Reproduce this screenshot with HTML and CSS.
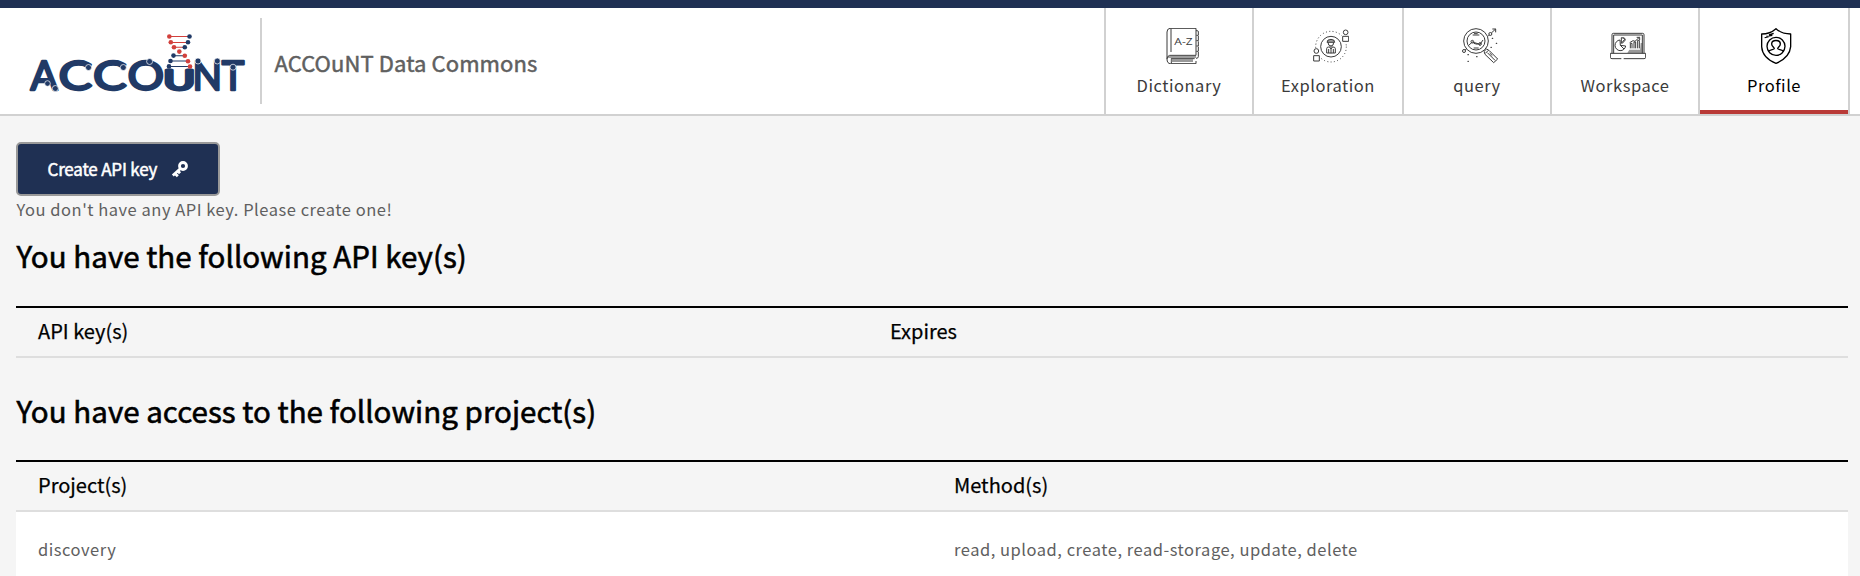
FILE: index.html
```
<!DOCTYPE html>
<html lang="en">
<head>
<meta charset="utf-8">
<title>ACCOuNT Data Commons</title>
<link rel="stylesheet" href="styles.css">
</head>
<body>
<div class="top-bar"></div>
<header class="header">
  <svg class="logo" viewBox="0 0 224 72" role="img" aria-label="ACCOuNT">
    <g class="logo-letters">
      <text x="1.500" y="61" textLength="27" lengthAdjust="spacingAndGlyphs">A</text>
      <text x="29.500" y="61" textLength="33.500" lengthAdjust="spacingAndGlyphs">C</text>
      <text x="64" y="61" textLength="33.500" lengthAdjust="spacingAndGlyphs">C</text>
      <text x="98.500" y="61" textLength="36.500" lengthAdjust="spacingAndGlyphs">O</text>
      <text class="logo-u" x="134.500" y="60.500" textLength="31.500" lengthAdjust="spacingAndGlyphs">U</text>
      <text x="163.500" y="61" textLength="29.500" lengthAdjust="spacingAndGlyphs">N</text>
      <text x="192.800" y="61" textLength="22.500" lengthAdjust="spacingAndGlyphs">T</text>
    </g>
    <g class="logo-dot">
      <circle cx="18.500" cy="54.500" r="2.800"/><circle cx="26.300" cy="59.500" r="3"/>
      <circle cx="59.500" cy="38.500" r="3"/><circle cx="94.300" cy="38.500" r="3"/>
      <circle cx="120.600" cy="32.500" r="3"/>
      <circle cx="169" cy="32" r="3"/><circle cx="188.300" cy="32" r="3"/><circle cx="204" cy="38.200" r="3"/>
    </g>
    <path class="helix-rung red" d="M140.500 7.500H160M142 13.500H158M145 18.300H155"/>
    <path class="helix-rung" d="M144.500 26.700H155M142 32H158M140.500 37.500H160"/>
    <g class="helix-red"><circle cx="140.300" cy="7.500" r="2.300"/><circle cx="141.800" cy="13.300" r="2.300"/><circle cx="145" cy="18.200" r="2.300"/><circle cx="150.300" cy="22.600" r="2.300"/><circle cx="155.800" cy="26.700" r="2.300"/><circle cx="159" cy="32.200" r="2.300"/><circle cx="161" cy="37.500" r="2.300"/></g>
    <g class="helix-blue"><circle cx="160.500" cy="7.500" r="2.300"/><circle cx="159" cy="13.300" r="2.300"/><circle cx="155.800" cy="18.200" r="2.300"/><circle cx="144.500" cy="26.600" r="2.300"/><circle cx="141.500" cy="32" r="2.300"/><circle cx="140" cy="37.400" r="2.300"/></g>
  </svg>
  <div class="divider"></div>
  <div class="site-title">ACCOuNT Data Commons</div>
  <nav class="nav">
    <a class="nav-item">
      <svg class="nav-icon" viewBox="0 0 108 108">
        <path d="M18 1H96V82H17Q9 84 9 93Q9 107 20 107H96V99M18 1Q9 2 9 12V93M21 2V72M12 87H96M22 92H92M22 106V91"/>
        <path class="shade" d="M23 93H87V102H23Z"/>
        <path d="M96 8H100Q103 8 103 12V22H97M103 24V38H97M103 40V54H97M103 56V70H97M103 72V86Q103 91 96 91"/>
        <text class="az" x="31" y="50" textLength="55" lengthAdjust="spacingAndGlyphs">A-Z</text>
      </svg>
      <span>Dictionary</span>
    </a>
    <a class="nav-item">
      <svg class="nav-icon" viewBox="0 0 108 108">
        <circle class="dots" cx="54" cy="56" r="46"/>
        <path class="gap" d="M0 60H22V102H0ZM86 4H108V42H86Z"/>
        <circle cx="54" cy="56" r="31"/>
        <circle cx="10" cy="69" r="7"/><path d="M2 83H19V99H2Z"/>
        <circle cx="98" cy="13" r="7"/><path d="M89 25H107V40H89Z"/>
        <path d="M42 43Q42 34 54 34Q65 34 65 43ZM43 39H64M45 43Q45 54 54 54Q62 54 62 43M41 75V62Q41 57 47 57H60Q67 57 67 62V75M50 58L54 63L58 58M54 63V76M47 63V75M61 63V75M41 75H67"/>
      </svg>
      <span>Exploration</span>
    </a>
    <a class="nav-item">
      <svg class="nav-icon" viewBox="0 0 108 108">
        <circle cx="42" cy="39" r="37"/><circle cx="42" cy="39" r="27"/>
        <path d="M20 52L31 42L54 49L63 36M35 46L47 49M32 21H52M36 17H47M35 60H50"/><circle cx="31" cy="41" r="4"/><circle cx="54" cy="48" r="4"/>
        <path d="M78 25L83 20M88 15L101 3M91 3H101V13"/><circle cx="85" cy="18" r="4.500"/><circle cx="6" cy="69" r="4.500"/><path d="M10 66L14 61"/>
        <path d="M66 70L74 63L82 68L107 93L95 104L69 79ZM70 76L79 67M76 74L99 97M83 75L91 83"/>
        <path class="specks" d="M91 31h1M103 46h1M87 58h1M44 86h1M18 80h1M18 100h1"/>
      </svg>
      <span>query</span>
    </a>
    <a class="nav-item">
      <svg class="nav-icon" viewBox="0 0 108 108">
        <path class="shade" d="M58 65H97V75H52ZM92 45H97V70H90Z"/>
        <path d="M6 76V20Q6 16 10 16H98Q102 16 102 20V76M11 76V21H97V76M1 76H107V88Q107 92 102 92H41M34 92H6Q1 92 1 88V76"/>
        <path d="M30 36A16 16 0 1 0 47 54L31 52ZM31 52L42 63M34 29V46L44 34Q41 29 34 29M38 29Q46 29 46 36L36 47M61 61V46H66V61M72 61V42H77V61M83 61V37H88V61M59 44L69 38L75 40L88 28M80 28H89V36"/>
      </svg>
      <span>Workspace</span>
    </a>
    <a class="nav-item active">
      <svg class="nav-icon" viewBox="0 0 108 108">
        <path d="M54 2Q36 18 11 18V56Q13 89 54 106Q95 89 98 56V18Q71 18 54 2Z"/>
        <circle cx="54" cy="55" r="27"/>
        <path d="M49 62C49 58 41 55 41 48C41 34 67 34 67 48C67 55 59 58 59 62C60 66 74 64 77 71M49 62C48 66 35 64 31 71M20 29L32 26M33 21L47 16M25 25L43 22"/>
      </svg>
      <span>Profile</span>
    </a>
  </nav>
</header>
<main class="content">
  <button class="create-button">Create API key
    <svg class="key" viewBox="0 0 16 16"><circle cx="11" cy="5" r="3.500"/><path d="M8.500 7.500L0.800 14.500M3 12.500L5.800 15.300M6 10L8 12.200"/></svg>
  </button>
  <p class="hint">You don't have any API key. Please create one!</p>
  <h2 class="heading">You have the following API key(s)</h2>
  <div class="table keys">
    <div class="row head"><div>API key(s)</div><div>Expires</div></div>
  </div>
  <h2 class="heading second">You have access to the following project(s)</h2>
  <div class="table projects">
    <div class="row head"><div>Project(s)</div><div>Method(s)</div></div>
    <div class="row data"><div>discovery</div><div>read, upload, create, read-storage, update, delete</div></div>
  </div>
</main>
</body>
</html>
```
FILE: styles.css
```
* { box-sizing: border-box; }
body {
  margin: 0;
  height: 576px;
  overflow: hidden;
  background: #f5f5f5;
  color: #606060;
  font: 16.5px/24px "Noto Sans CJK SC", "Noto Sans", sans-serif;
  letter-spacing: 0.52px;
}
.top-bar { height: 8px; background: #1f3053; }
.header {
  display: flex;
  height: 108px;
  padding-right: 10px;
  background: #fff;
  border-bottom: 2px solid #d1d1d1;
}
.logo { width: 224px; height: 72px; margin: 21px 0 0 29px; overflow: visible; flex: none; }
.logo-letters {
  font: 41px Lato, sans-serif;
  letter-spacing: 0;
  fill: #213a66;
  stroke: #213a66;
  stroke-width: 2.4px;
  stroke-linejoin: round;
}
.logo-u { font-size: 26px; stroke-width: 3px; }
.logo-dot { fill: #213a66; stroke: #fff; stroke-width: 0.7px; }
.helix-rung { stroke: #213a66; stroke-width: 1.1px; }
.helix-rung.red { stroke: #d2403c; }
.helix-red { fill: #d2403c; }
.helix-blue { fill: #213a66; }
.divider { width: 2px; height: 86px; margin: 10px 12px 0 7px; background: #d1d1d1; flex: none; }
.site-title {
  padding: 37px 0 0 0.5px;
  font-size: 22px;
  line-height: 34px;
  letter-spacing: 0.1px;
  -webkit-text-stroke: 0.5px #606060;
}
.nav {
  display: grid;
  grid-template-columns: 148px 150px 148px 148px 152px;
  height: 106px;
  margin-left: auto;
}
.nav-item {
  display: flex;
  flex-direction: column;
  align-items: center;
  gap: 9px;
  padding-top: 20px;
  border-left: 2px solid #d1d1d1;
  color: #3b3b3b;
}
.nav-item.active { color: #000; border-right: 2px solid #d1d1d1; box-shadow: inset 0 -4px #b93a37; }
.nav-icon {
  width: 36px;
  height: 36px;
  margin-left: 5px;
  fill: none;
  stroke: currentColor;
  stroke-width: 3px;
  stroke-linejoin: round;
}
.active .nav-icon { stroke-width: 4px; margin-left: 4px; }
.nav-icon .shade { fill: #999; stroke: none; }
.nav-icon .dots { stroke-dasharray: 3 7; }
.nav-icon .gap { fill: #fff; stroke: none; }
.nav-icon .specks { stroke-width: 4px; stroke-linecap: round; }
.az { font: 27px "Open Sans", sans-serif; letter-spacing: 0; fill: #3b3b3b; stroke: none; }
.content { padding: 26px 12px 0 16px; }
.create-button {
  display: flex;
  align-items: center;
  gap: 15px;
  width: 204px;
  height: 54px;
  padding: 0 0 0 29.5px;
  border: 2px solid #999;
  border-radius: 5px;
  background: #1f3053;
  color: #fff;
  font: 17px/24px "Noto Sans CJK SC", "Noto Sans", sans-serif;
  letter-spacing: -0.2px;
  -webkit-text-stroke: 0.5px #fff;
}
.key { width: 16px; height: 16px; fill: none; stroke: #fff; stroke-width: 2.8px; overflow: visible; }
.hint { margin: 1px 0 16px; padding-left: 0.5px; }
.heading {
  margin: 0;
  padding-left: 0.5px;
  color: #000;
  font-size: 29.5px;
  font-weight: 400;
  line-height: 36px;
  letter-spacing: 0.03px;
  -webkit-text-stroke: 0.6px #000;
}
.second { margin-top: 34px; }
.table { margin-top: 33px; }
.projects { margin-top: 32px; }
.row { display: grid; padding-left: 22px; }
.keys .row { grid-template-columns: 852px 1fr; }
.projects .row { grid-template-columns: 916px 1fr; }
.head {
  height: 52px;
  border-top: 2px solid #000;
  border-bottom: 2px solid #dedede;
  color: #000;
  font-size: 20px;
  line-height: 45px;
  letter-spacing: 0;
  -webkit-text-stroke: 0.25px #000;
}
.data { height: 76px; background: #fff; line-height: 75px; }
```
